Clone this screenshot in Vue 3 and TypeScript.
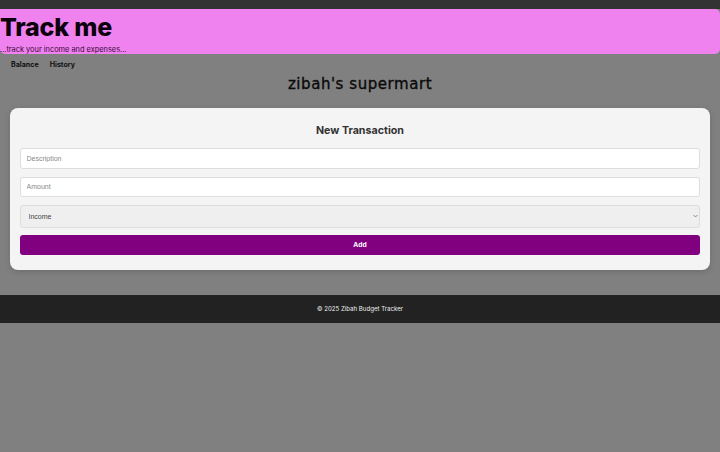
<script setup lang="ts">
const title = "Track me";
</script>

<template>
  <div class="page">
    <div class="topbar"></div>
    <header class="hero">
      <h1>{{ title }}</h1>
      <p>...track your income and expenses...</p>
    </header>
    <nav class="nav">
      <a>Balance</a>
      <a>History</a>
    </nav>
    <h2 class="shop">zibah's supermart</h2>
    <main class="card">
      <h3>New Transaction</h3>
      <form class="form" @submit.prevent>
        <input type="text" placeholder="Description" />
        <input type="text" placeholder="Amount" />
        <div class="select-wrap">
          <select>
            <option>Income</option>
            <option>Expense</option>
          </select>
          <svg class="chev" viewBox="0 0 8 5" width="5" height="4" aria-hidden="true">
            <path d="M1 1l3 3 3-3" fill="none" stroke="#777" stroke-width="1.4" />
          </svg>
        </div>
        <button type="submit">Add</button>
      </form>
    </main>
    <footer class="footer">© 2025 Zibah Budget Tracker</footer>
  </div>
</template>

<style>
html, body { margin: 0; background: #808080; }
</style>

<style scoped>
.page { font-family: "Inter", "Liberation Sans", sans-serif; min-height: 452px; background: #808080; overflow: hidden; will-change: opacity; }
.topbar { height: 9px; background: #333; }
.hero { height: 45px; background: #f082f0; border-radius: 0 5px 5px 5px; }
.hero h1 { margin: 0; padding-top: 4px; font-size: 25px; line-height: 28px; font-weight: 800; color: #0b000b; letter-spacing: -0.2px; }
.hero p { margin: 0; padding-top: 4px; font-size: 7.4px; line-height: 10px; color: #3a0a3a; }
.nav { display: flex; gap: 11px; padding: 6px 11px 0; height: 13px; font-size: 7.1px; line-height: 10px; font-weight: 700; color: #111; }
.shop { margin: 0; height: 27px; text-align: center; font-family: "DejaVu Sans", sans-serif; font-size: 15px; line-height: 22px; font-weight: 400; color: #0a0a0a; letter-spacing: 0.55px; -webkit-text-stroke: 0.35px #0a0a0a; }
.card { margin: 8px 10px 0; height: 162px; box-sizing: border-box; padding: 16px 10px 0; background: #f4f4f4; border-radius: 8px; box-shadow: 0 2px 6px rgba(0,0,0,.15); }
.card h3 { margin: 0; text-align: center; font-size: 10.7px; line-height: 13px; font-weight: 700; color: #333; }
.form { display: flex; flex-direction: column; margin-top: 11px; }
input, select { box-sizing: border-box; width: 100%; border: 1px solid #ddd; border-radius: 3px; font-family: "Liberation Sans", sans-serif; font-size: 7px; color: #555; }
input { height: 20.5px; padding: 0 5.5px; background: #fff; margin-bottom: 8px; }
input::placeholder { color: #8a8a8a; }
.select-wrap { position: relative; height: 22.5px; margin-bottom: 7.5px; }
select { display: block; height: 100%; padding: 0 7.5px; background: #efefef; color: #444; appearance: none; }
.chev { position: absolute; right: 2px; top: 9px; pointer-events: none; }
button { height: 20px; border: 0; border-radius: 3px; background: #800080; color: #fff; font-family: "Inter", sans-serif; font-size: 6.7px; font-weight: 700; }
.footer { margin-top: 25px; height: 28px; background: #222; color: #eee; text-align: center; font-size: 6.1px; line-height: 28px; }
</style>
